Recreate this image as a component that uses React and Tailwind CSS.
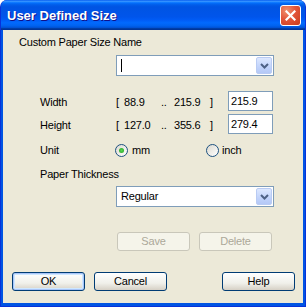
import React from 'react';

const font = "font-['Liberation_Sans',Arial,sans-serif]";

const Chevron = () => (
  <svg width="9" height="6" viewBox="0 0 9 6">
    <path d="M1 1 L4.5 4.5 L8 1" fill="none" stroke="#4D6185" strokeWidth="2" />
  </svg>
);

const Combo = ({ children }) => (
  <div className="ml-[113px] w-[158px] h-[21px] border border-[#7F9DB9] bg-white flex items-center justify-between p-[1px]">
    <div className="pl-[3px] flex items-center text-[11px] text-black">{children}</div>
    <div className="w-[16px] h-full rounded-[2px] border border-[#B9CBF3] bg-[linear-gradient(to_bottom,#DDE8FF,#C1D3FB_60%,#B4C8F6)] flex items-center justify-center">
      <Chevron />
    </div>
  </div>
);

const XpButton = ({ label, disabled, isDefault }) => (
  <button
    className={`w-[73px] h-[19px] rounded-[3px] border text-[11px] flex items-center justify-center ${
      disabled
        ? 'border-[#C9C7BA] bg-[#F5F4EA] text-[#ACA899]'
        : 'border-[#003C74] bg-[linear-gradient(to_bottom,#FFFFFF,#F0F0EA_60%,#D6D0C5)] text-black'
    } ${isDefault ? 'shadow-[inset_0_0_0_1px_#A8C4F8,inset_0_0_0_2px_#CEE7FF]' : ''}`}
  >
    {label}
  </button>
);

const Radio = ({ checked }) => (
  <div className="w-[13px] h-[13px] rounded-full border border-[#1C5180] bg-[linear-gradient(135deg,#DCD9CF,#FFFFFF)] flex items-center justify-center">
    {checked && <div className="w-[5px] h-[5px] rounded-full bg-[radial-gradient(circle,#55D651,#21A121)]" />}
  </div>
);

const RangeRow = ({ label, min, max, value, className }) => (
  <div className={`flex items-center h-[20px] ${className}`}>
    <span className="ml-[37px] w-[76px] pt-[2px]">{label}</span>
    <span className="w-[8px] pt-[2px]">[</span>
    <span className="w-[37px] pt-[2px]">{min}</span>
    <span className="w-[13px] pt-[2px]">..</span>
    <span className="w-[36px] pt-[2px]">{max}</span>
    <span className="w-[18px] pt-[2px]">]</span>
    <div className="w-[45px] h-[20px] border border-[#7F9DB9] bg-white pl-[2px] flex items-center">{value}</div>
  </div>
);

export default function App() {
  return (
    <div className={`w-[306px] h-[307px] bg-white ${font} tracking-[-0.2px]`}>
      <div className="w-full h-full rounded-t-[7px] bg-[#0054E3] border border-t-0 border-[#0831D9] flex flex-col overflow-hidden">
        {/* title bar */}
        <div className="h-[30px] shrink-0 -mx-[1px] px-[7px] flex items-center justify-between bg-[linear-gradient(to_bottom,#0058EE_0%,#3A93FF_4%,#288EFF_6%,#127DFF_8%,#036FFC_10%,#0262EE_14%,#0057E5_20%,#0054E3_24%,#0055EB_56%,#005BF5_66%,#026AFE_76%,#0062EF_86%,#0052D6_92%,#0040AB_94%,#003092_100%)]">
          <span className="text-white font-bold text-[13px] tracking-normal pt-[2px] [text-shadow:1px_1px_#0F1089]">
            User Defined Size
          </span>
          <div className="w-[21px] h-[21px] mr-[-2px] mt-[1px] rounded-[3px] border border-white bg-[radial-gradient(circle_at_30%_25%,#F0916F,#E2553A_45%,#C93C1B)] flex items-center justify-center">
            <svg width="11" height="11" viewBox="0 0 11 11">
              <path d="M1.5 1.5 L9.5 9.5 M9.5 1.5 L1.5 9.5" stroke="white" strokeWidth="2.2" strokeLinecap="square" />
            </svg>
          </div>
        </div>

        {/* body */}
        <div className="flex-1 mx-[2px] mb-[3px] bg-[#ECE9D8] text-[11px] text-black flex flex-col">
          <div className="ml-[16px] mt-[6px] h-[13px] leading-[13px]">Custom Paper Size Name</div>
          <div className="mt-[6px]">
            <Combo>
              <span className="inline-block w-[1px] h-[13px] bg-black" />
            </Combo>
          </div>

          <RangeRow className="mt-[15px]" label="Width" min="88.9" max="215.9" value="215.9" />
          <RangeRow className="mt-[3px]" label="Height" min="127.0" max="355.6" value="279.4" />

          <div className="flex items-center h-[20px] mt-[6px]">
            <span className="ml-[37px] w-[75px] pt-[1px]">Unit</span>
            <div className="w-[91px] flex items-center gap-[4px]">
              <Radio checked />
              <span className="pt-[1px]">mm</span>
            </div>
            <div className="flex items-center gap-[3px]">
              <Radio />
              <span className="pt-[1px]">inch</span>
            </div>
          </div>

          <div className="ml-[37px] mt-[8px] h-[13px] leading-[13px]">Paper Thickness</div>
          <div className="mt-[5px]">
            <Combo>Regular</Combo>
          </div>

          <div className="flex gap-[9px] ml-[114px] mt-[25px]">
            <XpButton label="Save" disabled />
            <XpButton label="Delete" disabled />
          </div>

          <div className="flex ml-[9px] mt-[21px]">
            <XpButton label="OK" isDefault />
            <div className="ml-[9px]">
              <XpButton label="Cancel" />
            </div>
            <div className="ml-[55px]">
              <XpButton label="Help" />
            </div>
          </div>
        </div>
      </div>
    </div>
  );
}
